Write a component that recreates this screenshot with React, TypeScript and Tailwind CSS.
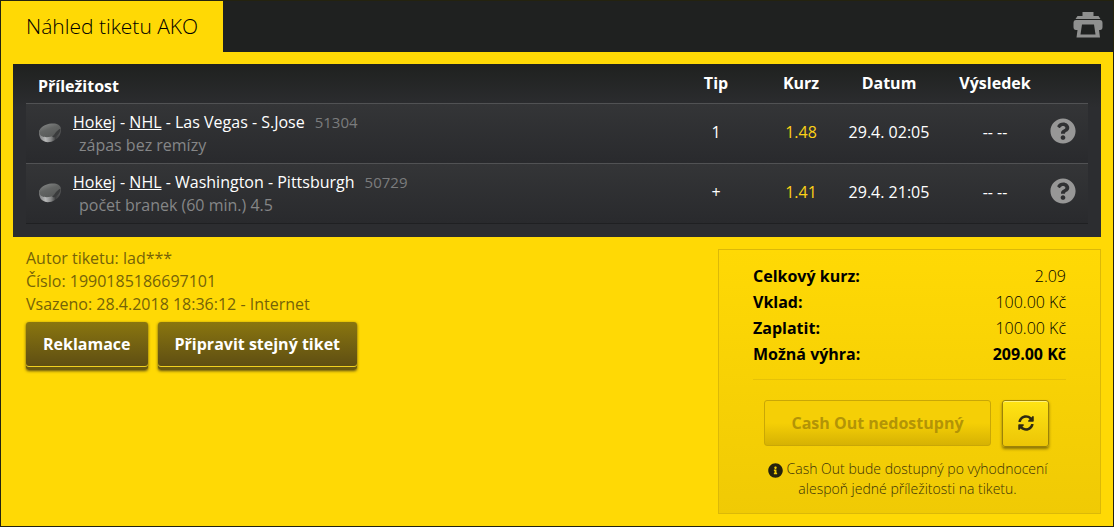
import { FaInfoCircle, FaQuestionCircle, FaSyncAlt } from "react-icons/fa"

interface Bet {
  match: string
  code: string
  market: string
  tip: string
  odds: string
  date: string
  result: string
}

const bets: Bet[] = [
  {
    match: "Las Vegas - S.Jose",
    code: "51304",
    market: "zápas bez remízy",
    tip: "1",
    odds: "1.48",
    date: "29.4. 02:05",
    result: "-- --",
  },
  {
    match: "Washington - Pittsburgh",
    code: "50729",
    market: "počet branek (60 min.) 4.5",
    tip: "+",
    odds: "1.41",
    date: "29.4. 21:05",
    result: "-- --",
  },
]

const summary = [
  { label: "Celkový kurz:", value: "2.09" },
  { label: "Vklad:", value: "100.00 Kč" },
  { label: "Zaplatit:", value: "100.00 Kč" },
  { label: "Možná výhra:", value: "209.00 Kč", strong: true },
]

function PrinterIcon() {
  return (
    <svg width="30" height="26" viewBox="0 0 30 26" fill="#8f908f">
      <path d="M9.500 0h11v4h5l2 3h-25l2-3h5z" />
      <path
        fillRule="evenodd"
        d="M3 8h24q2.500 0 2.500 3v4q0 3-2.500 3h-1l1 7.500H3.500l1-7.500H3q-2.500 0-2.500-3v-4q0-3 2.500-3zM9 12.500L7.500 22.500h15L21 12.500z"
      />
    </svg>
  )
}

function PuckIcon() {
  return (
    <svg width="24" height="22" viewBox="0 0 24 22" className="block">
      <defs>
        <linearGradient id="puckSide" x1="0" y1="0" x2="1" y2="0">
          <stop offset="0" stopColor="#7c7d7e" />
          <stop offset="0.3" stopColor="#b8b9b9" />
          <stop offset="0.55" stopColor="#858686" />
          <stop offset="0.75" stopColor="#3f4041" />
          <stop offset="1" stopColor="#5a5b5c" />
        </linearGradient>
        <linearGradient id="puckTop" x1="0" y1="0" x2="0.6" y2="1">
          <stop offset="0" stopColor="#8c8e8d" />
          <stop offset="0.5" stopColor="#636564" />
          <stop offset="1" stopColor="#565857" />
        </linearGradient>
      </defs>
      <path
        d="M1 9 C1 14 2 17 5 18.800 C8 21 13 20.500 17 18 C21 15.500 23 12 23 6.500 C20 4 3 5 1 9z"
        fill="url(#puckSide)"
      />
      <path
        d="M1.200 10 C1.500 5.500 7 2 13.500 1.500 C18.500 1 22.300 2.800 22.800 6 C22.500 10 18 13.500 12.500 14.800 C6.500 16 1.500 14.500 1.200 10z"
        fill="url(#puckTop)"
      />
      <path d="M14 14.500 C16.500 13.500 17.500 9 22.500 6.500 C22.800 10.500 19.500 13.500 16 15.500z" fill="#3a3b3c" />
    </svg>
  )
}

function BetRow({ bet }: { bet: Bet }) {
  return (
    <tr className="h-15 border-t border-[#515254] bg-linear-to-b from-[#343537] to-[#292a2d] text-white">
      <td className="py-1">
        <div className="flex items-center gap-[11px] pl-3">
          <PuckIcon />
          <div className="pt-0.5 leading-[23px]">
            <div>
              <a href="#hokej" className="underline">Hokej</a> - <a href="#nhl" className="underline">NHL</a> - {bet.match}
              <span className="ml-2.5 text-[15px] text-[#7b7c7d]">{bet.code}</span>
            </div>
            <div className="pl-1.5 text-[#858687]">{bet.market}</div>
          </div>
        </div>
      </td>
      <td className="pb-0.5 text-center">{bet.tip}</td>
      <td className="pb-0.5 text-center text-[#fcd116]">{bet.odds}</td>
      <td className="pb-0.5 text-center">{bet.date}</td>
      <td className="pb-0.5 text-center">{bet.result}</td>
      <td className="pb-1">
        <button aria-label="Nápověda" className="mx-auto block cursor-pointer text-[#979797]">
          <FaQuestionCircle size={26} />
        </button>
      </td>
    </tr>
  )
}

function OliveButton({ children }: { children: string }) {
  return (
    <button className="h-12 cursor-pointer rounded-[3px] bg-linear-to-b from-[#8a760e] to-[#5b4b12] px-[17px] pb-1 font-bold text-white shadow-[inset_0_-3px_0_#6b5a10,inset_0_-4px_0_#f0d020,0_1px_3px_#5b4b12]">
      {children}
    </button>
  )
}

export default function App() {
  return (
    <div className="min-h-screen border border-[#24230f] bg-[#ffd905] font-['Open_Sans','Noto_Sans',sans-serif] text-base text-black">
      <header className="flex items-center justify-between bg-[#1f2120] pr-2.5">
        <h1 className="bg-[#ffd905] px-[25px] py-[11px] text-[21px] leading-[29px] font-light">Náhled tiketu AKO</h1>
        <button aria-label="Tisk" className="cursor-pointer pb-1">
          <PrinterIcon />
        </button>
      </header>

      <main className="p-3">
        <section className="bg-[#2c2d30] bg-linear-to-b from-[#1f211f] to-[#2c2d30] to-25% px-[13px] pb-[13px]">
          <table className="w-full table-fixed border-collapse">
            <colgroup>
              <col />
              <col className="w-[122px]" />
              <col className="w-12" />
              <col className="w-32" />
              <col className="w-[84px]" />
              <col className="w-[51px]" />
            </colgroup>
            <thead>
              <tr className="h-[39px] text-white">
                <th className="pt-1.5 pl-3 text-left">Příležitost</th>
                <th>Tip</th>
                <th>Kurz</th>
                <th>Datum</th>
                <th>Výsledek</th>
                <td />
              </tr>
            </thead>
            <tbody className="border-b border-[#1f2022]">
              {bets.map((bet) => (
                <BetRow key={bet.code} bet={bet} />
              ))}
            </tbody>
          </table>
        </section>

        <div className="flex items-start justify-between pt-3">
          <div className="pl-[13px]">
            <div className="-mt-0.5 leading-[23px] text-[#756308]">
              <p>Autor tiketu: lad***</p>
              <p>Číslo: 1990185186697101</p>
              <p>Vsazeno: 28.4.2018 18:36:12 - Internet</p>
            </div>
            <div className="mt-1.5 flex gap-2.5">
              <OliveButton>Reklamace</OliveButton>
              <OliveButton>Připravit stejný tiket</OliveButton>
            </div>
          </div>

          <aside className="w-[383px] border border-[#dcb908] bg-linear-to-b from-[#ffd905] to-[#f0ca05] px-[34px] pt-[13px] pb-3.5">
            <dl className="border-b border-[#e6c207] pb-3">
              {summary.map((row) => (
                <div key={row.label} className="flex justify-between leading-[26px]">
                  <dt className="font-bold">{row.label}</dt>
                  <dd className={row.strong ? "font-bold" : "font-light"}>{row.value}</dd>
                </div>
              ))}
            </dl>
            <div className="mt-5 flex justify-center gap-[11px] pr-1.5">
              <button
                disabled
                className="h-[46px] w-[227px] rounded-[3px] border border-[#c9a706] bg-linear-to-b from-[#f5cf06] from-50% to-[#d6b203] font-bold text-[#b39406]"
              >
                Cash Out nedostupný
              </button>
              <button
                aria-label="Obnovit"
                className="flex size-[47px] cursor-pointer items-center justify-center rounded-[3px] border border-[#9c8208] bg-linear-to-b from-[#ffe414] to-[#ecc506] text-[#2f2a12] shadow-[inset_0_1px_0_#fff27a,0_2px_3px_#8c7406]"
              >
                <FaSyncAlt size={16} />
              </button>
            </div>
            <p className="mt-3 pr-1 text-center text-sm leading-5 font-light text-[#3b3208]">
              <FaInfoCircle size={15} className="mr-1 inline-block align-text-bottom text-[#24220f]" />
              Cash Out bude dostupný po vyhodnocení
              <br />
              alespoň jedné příležitosti na tiketu.
            </p>
          </aside>
        </div>
      </main>
    </div>
  )
}
